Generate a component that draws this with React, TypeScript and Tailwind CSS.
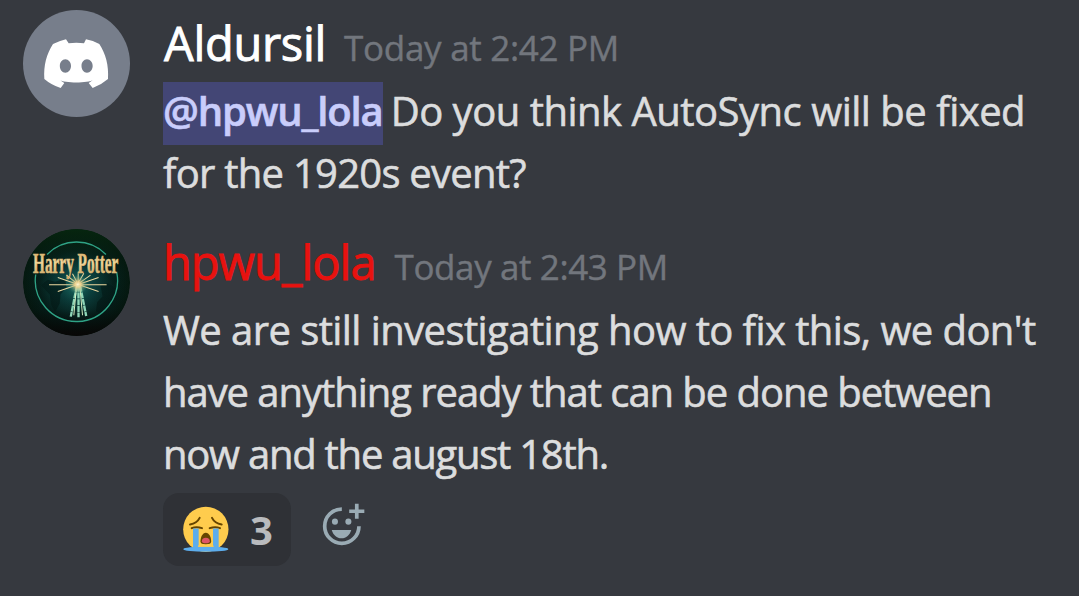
import type { ReactNode } from "react";

function ClydeAvatar() {
  return (
    <svg viewBox="39 29 321 321" className="size-[107px] bg-[#777e8b]" aria-hidden="true">
      <path
        fill="#fff"
        fillRule="evenodd"
        d="M129 131Q147 122 168 117L176 129Q199 125 222 129L228 117Q249 121 268 131C287 160 297 196 294 236Q273 254 248 263L236 248L250 238C234 249 164 249 148 238L163 248L152 263Q124 254 103 236C100 196 110 160 129 131ZM166 177c-9.500 0-16.500 9-16.500 20s7 20 16.500 20 17-9 17-20-7.500-20-17-20zM231 177c-9.500 0-16.500 9-16.500 20s7 20 16.500 20 17-9 17-20-7.500-20-17-20z"
      />
    </svg>
  );
}

function WizardAvatar() {
  return (
    <svg viewBox="0 0 320 320" className="size-[107px]" aria-hidden="true">
      <defs>
        <radialGradient id="disc" cx="50%" cy="54%" r="50%">
          <stop offset="0" stopColor="#1d7a72" />
          <stop offset="0.3" stopColor="#0d4a48" />
          <stop offset="0.68" stopColor="#06231f" />
          <stop offset="1" stopColor="#051a10" />
        </radialGradient>
        <linearGradient id="shade" x1="0" y1="0" x2="0" y2="1">
          <stop offset="0" stopColor="#06280f" stopOpacity="0.85" />
          <stop offset="0.4" stopColor="#04140f" stopOpacity="0.1" />
          <stop offset="0.75" stopColor="#030806" stopOpacity="0.3" />
          <stop offset="1" stopColor="#080606" stopOpacity="1" />
        </linearGradient>
        <linearGradient id="gold" x1="0" y1="0" x2="0" y2="1">
          <stop offset="0" stopColor="#c9964c" />
          <stop offset="0.5" stopColor="#f0d9a0" />
          <stop offset="1" stopColor="#c79a55" />
        </linearGradient>
        <radialGradient id="spark">
          <stop offset="0" stopColor="#fff6d0" />
          <stop offset="0.3" stopColor="#efcf88" stopOpacity="0.8" />
          <stop offset="1" stopColor="#2c8c7c" stopOpacity="0" />
        </radialGradient>
      </defs>
      <circle cx="160" cy="160" r="160" fill="url(#disc)" />
      <path d="M54 168l20-16 22 6 30-10 4 26-18 22-2 26-14 26-12-22-4-30zM232 170l22-8 24 18-10 44-30 30-20-8 4-28 16-16z" fill="#04201d" opacity="0.7" />
      <circle cx="160" cy="160" r="160" fill="url(#shade)" />
      <path d="M72 76A123 123 0 0 1 248 76M280 128A123 123 0 1 1 38 136" fill="none" stroke="#2fa386" strokeWidth="4" />
      <path d="M161 170L143 262M166 170V264M171 170L189 260" stroke="#8fd6b8" strokeWidth="7" strokeDasharray="18 2" />
      <path d="M160 170L152 258M170 170L178 258" stroke="#d5ecc0" strokeWidth="3" />
      <g stroke="#eed9a0" strokeWidth="3">
        <path d="M78 167H250M104 145L226 187M104 187L226 145M130 138L160 162M202 138L168 162M148 134L162 160M182 132L166 160M165 132V166" />
      </g>
      <circle cx="164" cy="166" r="30" fill="url(#spark)" />
      <text transform="translate(30 131) scale(0.52 1)" fill="url(#gold)" stroke="#e3c07c" strokeWidth="2" fontFamily="Liberation Serif, serif" fontWeight="700" fontSize="88">
        Harry Potter
      </text>
    </svg>
  );
}

function SobEmoji() {
  return (
    <svg viewBox="101 82 138 140" className="h-[47px] w-[46px]" role="img" aria-label="Loudly crying face">
      <circle cx="169.5" cy="151.5" r="68" fill="#ffcc4d" />
      <g fill="none" stroke="#664500" strokeWidth="6" strokeLinecap="round">
        <path d="M122 137q21-4 29-20M217 137q-21-4-29-20" />
        <path d="M127 148q14-6 31 0M212 148q-14-6-31 0" />
      </g>
      <path d="M131 149h17v62h-17zM191 149h17v62h-17z" fill="#5dadec" />
      <ellipse cx="169.5" cy="211" rx="67.5" ry="8" fill="#5dadec" />
      <path d="M148 204h43q5 0 0-5h-43q-5 5 0 5z" fill="#ffcc4d" />
      <path d="M169.5 162c10 0 16 14 16 25 0 7-5 9-16 9s-16-2-16-9c0-11 6-25 16-25z" fill="#664500" />
      <path d="M169.5 177c8 0 12 5 12 10 0 4-5 6-12 6s-12-2-12-6c0-5 4-10 12-10z" fill="#dd5566" />
    </svg>
  );
}

function AddReactionIcon() {
  return (
    <svg viewBox="516 70 128 128" className="size-[43px]" role="img" aria-label="Add reaction">
      <path d="M575 88A51 51 0 1 0 626 139" fill="none" stroke="#9aabb4" strokeWidth="11" />
      <g fill="#9aabb4">
        <circle cx="554.5" cy="125.500" r="9" />
        <circle cx="594.5" cy="125.500" r="9" />
        <path d="M545 150h58c-4 15-15 25-29 25s-25-10-29-25z" />
        <path d="M614 72h11v17h17v11h-17v17h-11v-17h-17V89h17z" />
      </g>
    </svg>
  );
}

function Message({ avatar, author, time, children }: { avatar: ReactNode; author: ReactNode; time: ReactNode; children: ReactNode }) {
  return (
    <article className="flex items-start gap-[33px]">
      <div className="size-[107px] shrink-0 overflow-hidden rounded-full">{avatar}</div>
      <div className="pt-0.5">
        <header className="flex h-[68px] items-baseline leading-[62px]">
          {author}
          {time}
        </header>
        {children}
      </div>
    </article>
  );
}

export default function App() {
  return (
    <main className="flex h-[596px] w-[1079px] flex-col overflow-hidden bg-[#36393f] pt-2.5 pl-[23px] font-['Open_Sans',sans-serif] whitespace-nowrap">
      <Message
        avatar={<ClydeAvatar />}
        author={<h2 className="ml-px text-[47px] tracking-[-0.3px] text-white [-webkit-text-stroke:0.9px]">Aldursil</h2>}
        time={<time className="ml-[18px] text-[35px] tracking-[-0.3px] text-[#72767d] [-webkit-text-stroke:0.4px]">Today at 2:42 PM</time>}
      >
        <div className="text-[40px] leading-[62px] text-[#dcddde] [-webkit-text-stroke:0.6px]">
          <p className="tracking-[-0.5px]">
            <span className="mr-[8px] bg-[#434675] pt-px pb-[7px] font-semibold tracking-[-1.15px] text-[#c9cdfb]">@hpwu_lola</span>
            Do you think AutoSync will be fixed
          </p>
          <p className="tracking-[-0.75px]">for the 1920s event?</p>
        </div>
      </Message>
      <div className="mt-[25px]">
        <Message
          avatar={<WizardAvatar />}
          author={<h2 className="text-[47px] tracking-[-1px] text-[#e8120f] [-webkit-text-stroke:0.8px]">hpwu_lola</h2>}
          time={<time className="ml-[19px] text-[35px] tracking-[-0.4px] text-[#72767d] [-webkit-text-stroke:0.4px]">Today at 2:43 PM</time>}
        >
          <div className="text-[40px] leading-[62px] text-[#dcddde] [-webkit-text-stroke:0.6px]">
            <p className="tracking-[-0.58px]">We are still investigating how to fix this, we don't</p>
            <p className="tracking-[-1.05px]">have anything ready that can be done between</p>
            <p className="tracking-[-1.25px]">now and the august 18th.</p>
          </div>
          <div className="mt-[8px] flex items-start">
            <button className="flex h-[73px] w-32 items-center rounded-2xl bg-[#2f3136] pl-5">
              <SobEmoji />
              <span className="ml-[21px] text-[40px] leading-none font-bold text-[#b9bbbe]">3</span>
            </button>
            <button className="mt-[10px] ml-[31px]">
              <AddReactionIcon />
            </button>
          </div>
        </Message>
      </div>
    </main>
  );
}
